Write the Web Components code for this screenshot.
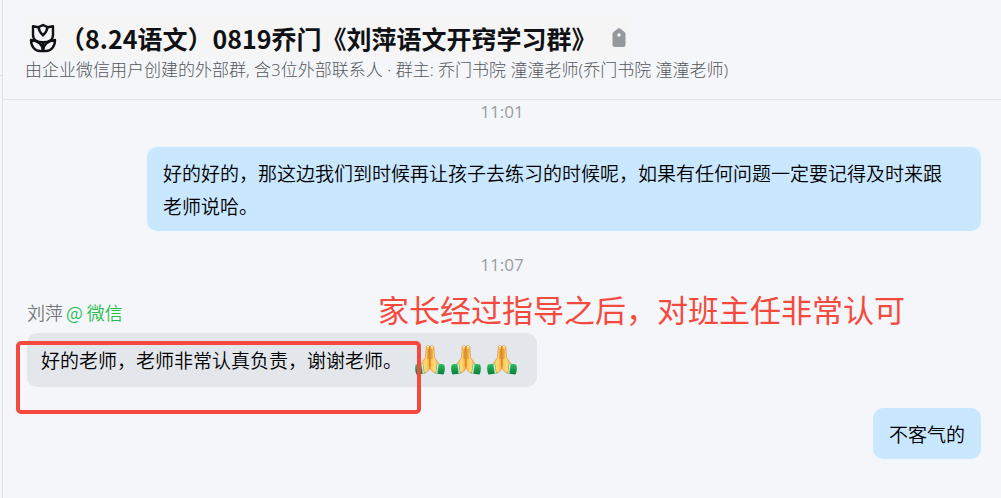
<!DOCTYPE html>
<html lang="zh-CN">
<head>
<meta charset="utf-8">
<title>群聊</title>
<style>
html, body { height: 100%; margin: 0; }
body { background: #f5f6fa; font-family: "Noto Sans CJK SC", sans-serif; color: #101114; }
</style>
</head>
<body>
<chat-window></chat-window>
<script>
function define(name, html) {
  const t = document.createElement('template');
  t.innerHTML = html;
  customElements.define(name, class extends HTMLElement {
    constructor() {
      super();
      this.attachShadow({ mode: 'open' }).appendChild(t.content.cloneNode(true));
    }
  });
}

define('tulip-icon', `
<style>:host{display:block;width:28px;height:30px}svg{display:block}</style>
<svg width="28" height="30" viewBox="0 0 28 30" fill="none" stroke="#101114" stroke-width="2.4" stroke-linejoin="round" aria-hidden="true">
<path d="M4 3.200 9.500 4.200 14 2 18.500 4.200 24 3.200V12c0 4.500-4 7.200-10 7.200S4 16.500 4 12Z"/>
<path d="M9.500 4.200c.4 3.300 2 6 4.500 8.200 2.500-2.200 4.100-4.900 4.500-8.200"/>
<path d="M14 19v9M14 28C14 22 9 17.500 2 17c0 6.500 4 11 9 11h6c5 0 9-4.500 9-11-7 .5-12 5-12 11"/>
</svg>`);

define('tag-icon', `
<style>:host{display:block;width:14px;height:20px}svg{display:block}</style>
<svg width="14" height="20" viewBox="0 0 14 20" aria-hidden="true"><path fill="#95989d" fill-rule="evenodd" d="M6 .6Q7 0 8 .6L12.500 4Q13.500 4.800 13.500 6V16.500Q13.500 19 11 19H3Q.5 19 .5 16.500V6Q.5 4.800 1.500 4ZM7 5.300a1.700 1.700 0 1 0 0 3.400 1.700 1.700 0 0 0 0-3.400Z"/></svg>`);

define('pray-emoji', `
<style>:host{display:block;width:30px;height:30px}svg{display:block}</style>
<svg width="30" height="30" viewBox="0 0 30 30" role="img" aria-label="合十">
<defs>
<linearGradient id="s" x1="0" x2="1"><stop offset="0" stop-color="#ffc04a"/><stop offset=".55" stop-color="#ffda7d"/><stop offset="1" stop-color="#f6a235"/></linearGradient>
<linearGradient id="g" x1="0" y1="0" x2="0" y2="1"><stop offset="0" stop-color="#35bd62"/><stop offset="1" stop-color="#087b39"/></linearGradient>
</defs>
<path d="M13.500.8C12 .4 11.200 1.300 11.100 3L10.500 12.500 6 19 8 28C11.500 28 14 26 15 22V1.500Z" fill="url(#s)" stroke="#d98322" stroke-width=".6"/>
<path d="M16.500.8C18 .4 18.800 1.300 18.900 3L19.500 12.500 24 19 22 28C18.500 28 16 26 15 22V1.500Z" fill="url(#s)" stroke="#d98322" stroke-width=".6"/>
<path d="M15 2v20M13.100 4v10M16.900 4v10" stroke="#c4701d" stroke-width=".7"/>
<path d="M12 1.600h2M16 1.600h2" stroke="#fff0c8" stroke-width="1.200"/>
<path d="M.8 19.500 8 18.500 9.500 28.500 1.500 29.500Q-.8 25 .8 19.500ZM29.200 19.500 22 18.500 20.500 28.500 28.500 29.500Q30.800 25 29.200 19.500Z" fill="url(#g)"/>
<path d="M6.200 18.700 7.700 18.500 9.200 28.500 7.700 28.700ZM23.800 18.700 22.300 18.500 20.800 28.500 22.300 28.700Z" fill="#cfe9cb"/>
</svg>`);

define('chat-header', `
<style>
:host{display:block;box-sizing:border-box;padding:17px 24px 17px 21px;border-bottom:1px solid #e1e3e6}
.title{display:flex;align-items:center;width:fit-content;height:41px;padding:0 5px;background:#f5f5f5}
h1{margin:0 0 0 3px;font-size:25px;line-height:40px;font-weight:700;white-space:nowrap}
tag-icon{margin-left:16px}
p{margin:0 0 0 1px;font-size:17px;line-height:24px;font-weight:300;color:#54575c;white-space:nowrap;font-family:"Open Sans","Noto Sans CJK SC",sans-serif}
</style>
<div class="title"><tulip-icon></tulip-icon><h1><slot name="title"></slot></h1><tag-icon></tag-icon></div>
<p><slot></slot></p>`);

define('chat-time', `
<style>:host{display:block;text-align:center;font:17px/24px "Open Sans","Noto Sans CJK SC",sans-serif;color:#999ca1}</style>
<slot></slot>`);

define('chat-bubble', `
<style>
:host{display:flex;align-items:center;box-sizing:border-box;width:fit-content;padding:9px 16px;border-radius:10px;background:#c9e7ff;color:#000;font-size:19px;line-height:33px;font-weight:350}
:host([mine]){margin-left:auto}
:host([wide]){width:auto;margin-left:120px}
:host([other]){background:#e3e6eb;padding:10px 20px 11px 14px}
</style>
<slot></slot>`);

define('chat-sender', `
<style>:host{display:flex;gap:3px;font-size:18px;line-height:26px;font-weight:350;color:#74777c}span{color:#1fbe4f}</style>
<slot></slot><span><slot name="source"></slot></span>`);

define('red-note', `
<style>:host{display:block;font-size:31px;line-height:44px;color:#f44a3d;white-space:nowrap}</style>
<slot></slot>`);

define('chat-window', `
<style>
:host{display:grid;grid-template-columns:3px 1fr;min-height:100%}
.rail{display:grid;grid-template-rows:76px 1fr;border-right:1px solid #dfe1e5}
.rail i{border-bottom:1px solid #dfe1e5}
.log{display:flex;flex-direction:column;padding:0 20px 39px 24px}
chat-time{margin-right:4px}
.first{margin-bottom:23px}
.second{margin-top:22px}
.reply{position:relative;margin-top:22px}
.reply chat-bubble{margin-top:8px}
.emoji{display:flex;gap:6px;margin-left:13px}
.last{margin-top:21px}
red-note{position:absolute;left:351px;top:-12px}
.frame{position:absolute;left:-11px;top:42px;width:405px;height:73px;box-sizing:border-box;border:4px solid #f44a3d;border-radius:5px}
</style>
<div class="rail"><i></i></div>
<main>
<chat-header><span slot="title">（8.24语文）0819乔门《刘萍语文开窍学习群》</span>由企业微信用户创建的外部群, 含3位外部联系人 · 群主: 乔门书院 潼潼老师(乔门书院 潼潼老师)</chat-header>
<div class="log">
<chat-time class="first">11:01</chat-time>
<chat-bubble mine wide><span>好的好的，那这边我们到时候再让孩子去练习的时候呢，如果有任何问题一定要记得及时来跟<br>老师说哈。</span></chat-bubble>
<chat-time class="second">11:07</chat-time>
<div class="reply">
<chat-sender>刘萍<span slot="source">@ 微信</span></chat-sender>
<chat-bubble other><span>好的老师，老师非常认真负责，谢谢老师。</span><div class="emoji"><pray-emoji></pray-emoji><pray-emoji></pray-emoji><pray-emoji></pray-emoji></div></chat-bubble>
<red-note>家长经过指导之后，对班主任非常认可</red-note>
<div class="frame"></div>
</div>
<chat-bubble mine class="last">不客气的</chat-bubble>
</div>
</main>`);
</script>
</body>
</html>
